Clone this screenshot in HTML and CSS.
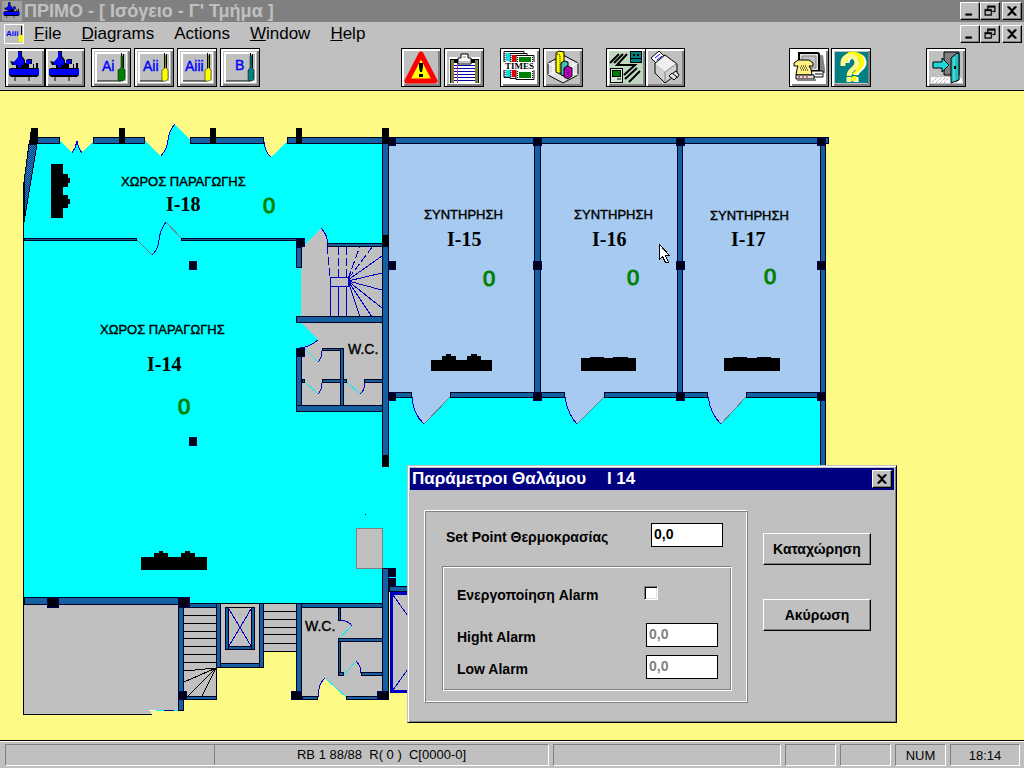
FILE: index.html
```html
<!DOCTYPE html>
<html lang="el">

<head>
  <meta charset="UTF-8" />
  <meta name="viewport" content="width=device-width, initial-scale=1" />
  <title>ΠΡΙΜΟ</title>
  <link rel="stylesheet" href="styles.css">
</head>

<body>
  <svg class="defs" aria-hidden="true">
    <symbol id="compressor" viewBox="1 1 38 37">
      <path d="M13 3h4v5l3 4v3h2v-4h5v5h-3v4h4v-4h1v4h2v-5h2v5l1 1v6l-2 2H6l-2-2v-6l2-1h5v-3H7l-2-4 4 1 4-4z" fill="#000" />
      <path d="M13 4h3v5l3 4v4h-3v3h-3v-3H9l-1-3 2-1 3-4zM21 12h5v4h-5zM6 21h28v6H6l-2-1v-4z" fill="#0000ff" />
      <path d="M10 28v5M24 28v5" stroke="#000" />
    </symbol>
    <symbol id="minimize" viewBox="0 0 20 18"><path d="M5 12h7v2H5z" /></symbol>
    <symbol id="restore" viewBox="0 0 20 18">
      <path d="M7 3h9v7h-3V9h2V5H8v2H7zM4 7h8v7H4zM5 9v4h6V9z" fill-rule="evenodd" />
    </symbol>
    <symbol id="close" viewBox="0 0 20 18">
      <path d="M5 4h2l3 3 3-3h2v1l-4 4 4 4v1h-2l-3-3-3 3H5v-1l4-4-4-4z" />
    </symbol>
  </svg>

  <div class="app">
    <header class="titlebar">
      <svg class="app-icon"><use href="#compressor" /></svg>
      <h1>ΠΡΙΜΟ - [ Ισόγειο - Γ' Τμήμα ]</h1>
      <div class="window-buttons">
        <button type="button" aria-label="Minimize"><svg><use href="#minimize" /></svg></button>
        <button type="button" aria-label="Restore"><svg><use href="#restore" /></svg></button>
        <button type="button" aria-label="Close"><svg><use href="#close" /></svg></button>
      </div>
    </header>

    <nav class="menubar">
      <svg class="doc-icon" viewBox="0 0 20 20">
        <path d="M0 0h20v20H0z" fill="#fff" />
        <path d="M1 1h18v18H1z" fill="#c0c0c0" />
        <text x="2" y="12">Aiii</text>
        <path d="M17 2h1v9h-1z" fill="#000" />
        <path d="M15 11h4v7h-4z" fill="#ffff00" />
      </svg>
      <button type="button"><u>F</u>ile</button>
      <button type="button"><u>D</u>iagrams</button>
      <button type="button">Actions</button>
      <button type="button"><u>W</u>indow</button>
      <button type="button"><u>H</u>elp</button>
      <div class="window-buttons">
        <button type="button" aria-label="Minimize diagram"><svg><use href="#minimize" /></svg></button>
        <button type="button" aria-label="Restore diagram"><svg><use href="#restore" /></svg></button>
        <button type="button" aria-label="Close diagram"><svg><use href="#close" /></svg></button>
      </div>
    </nav>

    <div class="toolbar">
      <div class="tools">
        <button type="button" aria-label="Compressors 1"><svg><use href="#compressor" /></svg></button>
        <button type="button" aria-label="Compressors 2"><svg><use href="#compressor" /></svg></button>
      </div>
      <div class="tools tools-floors">
        <button type="button" aria-label="Floor Ai">
          <svg viewBox="1 1 38 37">
            <path d="M4 4h32v31H4z" fill="#fff" /><path d="M6 6h29v27H6z" fill="#c0c0c0" />
            <path d="M6 33h24M30.500 5v15M32.500 6v14" class="ink" />
            <text x="11" y="23">Ai</text>
            <path d="M30 8h2v12l2 2v9l-2 2h-4l-1-2v-9l3-2z" fill="#008000" class="edge" />
          </svg>
        </button>
        <button type="button" aria-label="Floor Aii">
          <svg viewBox="1 1 38 37">
            <path d="M4 4h32v31H4z" fill="#fff" /><path d="M6 6h29v27H6z" fill="#c0c0c0" />
            <path d="M6 33h24M30.500 5v15M32.500 6v14" class="ink" />
            <text x="9" y="23">Aii</text>
            <path d="M31 8h1v12l2 2v9l-2 2h-4v-11l3-2z" fill="#ffff00" class="edge" />
          </svg>
        </button>
        <button type="button" aria-label="Floor Aiii">
          <svg viewBox="1 1 38 37">
            <path d="M4 4h32v31H4z" fill="#fff" /><path d="M6 6h29v27H6z" fill="#c0c0c0" />
            <path d="M6 33h24M30.500 5v15M32.500 6v14" class="ink" />
            <text x="8" y="23">Aiii</text>
            <path d="M31 8h1v12l2 2v9l-2 2h-4v-11l3-2z" fill="#ffff00" class="edge" />
          </svg>
        </button>
        <button type="button" aria-label="Floor B">
          <svg viewBox="1 1 38 37">
            <path d="M4 4h32v31H4z" fill="#fff" /><path d="M6 6h29v27H6z" fill="#c0c0c0" />
            <path d="M6 33h24M30.500 5v15M32.500 6v14" class="ink" />
            <text x="15" y="22">B</text>
            <path d="M30 8h2v12l2 2v9l-2 2h-3l-1-2v-9l2-2z" fill="#008080" class="edge" />
          </svg>
        </button>
      </div>
      <div class="tools tools-alarms">
        <button type="button" aria-label="Alarms">
          <svg viewBox="1 1 38 37">
            <path d="M20 6L34 33H6z" fill="#ffff00" stroke="#ff0000" stroke-width="5" stroke-linejoin="round" />
            <path d="M18 15h4v4l-1 5h-2l-1-5zM18 26h4v3h-4z" />
          </svg>
        </button>
        <button type="button" aria-label="Log">
          <svg viewBox="1 1 38 37">
            <path d="M5 9h31v27H5z" fill="#fff" />
            <path d="M6 11h29v24H6z" />
            <path d="M7 12h3v23H7zM31 12h3v23h-3z" fill="#808040" />
            <path d="M10 15h21v20H10z" fill="#fff" />
            <path d="M10 17.500h21M10 20.500h21M10 23.500h21M10 26.500h21M10 29.500h21M10 32.500h21" stroke="#0000a0" />
            <path d="M13.500 15v20" stroke="#c04080" />
            <path d="M14 10h3V6h7v4h3v6H14z" fill="#fff" stroke="#000" />
            <path d="M15 13h11v2H15zM19 8h3v2h-3z" fill="#c0c0c0" />
          </svg>
        </button>
      </div>
      <div class="tools tools-trends">
        <button type="button" aria-label="Times">
          <svg viewBox="1 1 38 37">
            <path d="M3 3h34v33H3z" fill="#fff" />
            <g stroke="#000">
              <path d="M4 3.500h20v26H4z" fill="#fff" /><path d="M10 5.500h17v25H10z" fill="#f8f0f0" />
              <path d="M16 7.500h18v24H16z" fill="#fff" />
            </g>
            <path d="M6 5h4v8H6zM6 22h4v7H6z" fill="#00e0e0" />
            <path d="M12 7h4v7h-4zM12 22h4v7h-4z" fill="#e00000" />
            <path d="M19 9h12v5H19zM19 24h12v6H19z" fill="#008000" />
            <path d="M5 5v9M11 7v7M17.500 9v5M32.500 9v5M5 22v8M11 22v8M17.500 23v8M32.500 23v8" stroke="#000" stroke-dasharray="1 1" />
            <path d="M3 14h34v8H3z" fill="#fff" />
            <text x="5" y="21" class="times">TIMES</text>
          </svg>
        </button>
        <button type="button" aria-label="Charts">
          <svg viewBox="1 1 38 37">
            <path d="M20 7l15 8v12l-15 8-15-8V15z" fill="#e0e0e0" stroke="#000" />
            <path d="M5 15l15 8 15-8M5 27l15-7 15 7M20 23v-3M10 13v14M30 13v14" stroke="#fff" fill="none" />
            <path d="M13 5l3-2 5 1v19l-4 3-4-2z" fill="#ffff00" stroke="#000" />
            <path d="M18 15l3-2 4 1v12l-4 2-3-1z" fill="#40c0c0" stroke="#000" />
            <path d="M21 20l3-2 5 2v8l-4 3-4-2z" fill="#c000c0" stroke="#000" />
            <path d="M14 6l3 1v18M21 21l4 1v8" stroke="#000" fill="none" stroke-dasharray="1 1" />
          </svg>
        </button>
      </div>
      <div class="tools tools-network">
        <button type="button" aria-label="Network">
          <svg viewBox="1 1 38 37">
            <path d="M3 3h34v33H3z" fill="#c0d8c0" />
            <path d="M24 3h12v12H24z" fill="#000" /><path d="M25 4h10v6H25zM25 11h10v3H25z" fill="#008080" />
            <path d="M27 6h2v2h-2zM31 6h2v2h-2z" />
            <path d="M4 20h13v15H4z" fill="#000" /><path d="M5 21h11v13H5z" fill="#d8e8d8" />
            <path d="M6 22h9v7H6z" /><path d="M7 23h7v5H7z" fill="#008000" /><path d="M11 31h4" stroke="#000" />
            <path d="M4 15L13 6M8 15l9-9M21 6L11 17h18L18 27" stroke="#000" stroke-width="2" fill="none" />
            <path d="M19 31l12-11M23 34l11-11" stroke="#000" stroke-width="2" />
          </svg>
        </button>
        <button type="button" aria-label="Connection" class="overlap">
          <svg viewBox="1 1 38 37">
            <path d="M6 10l8-7 6 6-8 7z" fill="#fff" stroke="#000" />
            <path d="M10 10l5-4M12 12l5-4" stroke="#0000ff" />
            <path d="M10 15L20 7l12 9v10L20 35 10 25z" fill="#d0d0d0" stroke="#000" />
            <path d="M11 16l9-8 11 8-10 8z" fill="#f0f0f0" />
            <path d="M20 34V24l11-8" stroke="#808080" fill="none" />
            <path d="M24 28l3-3 5 4-3 3zM28 25l3-2 3 4-2 3" fill="#e0e0e0" stroke="#000" />
          </svg>
        </button>
      </div>
      <div class="tools tools-support">
        <button type="button" aria-label="Telephone">
          <svg viewBox="1 1 38 37">
            <path d="M3 3h34v33H3z" fill="#fff" />
            <path d="M12 9l22-2 2 15v3H14z" fill="#808080" />
            <path d="M10 5h19l1 1v17H10z" fill="#e0e0e0" stroke="#000" stroke-width="2" />
            <path d="M13 8h14v12H13z" fill="#c0c0c0" stroke="#808080" />
            <path d="M19 23h15v6H19z" fill="#fff" stroke="#000" />
            <path d="M26 26h7" stroke="#000" />
            <path d="M5 15l4-3h11l4 3v3h-4l2 3 1 6H7l1-6 1-3H5z" fill="#fff080" stroke="#000" />
            <path d="M12 18h6M11 20h8M12 22h8" stroke="#000" stroke-dasharray="1 1" />
            <path d="M7 27h18v4H7z" fill="#e0e0e0" stroke="#000" />
            <path d="M9 29h12" stroke="#c00000" stroke-dasharray="2 2" /><path d="M8 32h19" stroke="#808080" stroke-width="2" />
          </svg>
        </button>
        <button type="button" aria-label="Help topics">
          <svg viewBox="1 1 38 37">
            <path d="M4 4h33v31H4z" fill="#008080" />
            <g fill="none" stroke-width="5">
              <path d="M16 15c0-11 17-10 17 0 0 6-8 7-8 12M25 29v5" stroke="#fff" />
              <path d="M14 14c0-11 17-10 17 0 0 6-8 7-8 12M23 28v5" stroke="#ffff00" />
              <path d="M12 18v-3c0-9 14-9 14 0 0 6-8 6-8 13M18 29v5" stroke="#fff890" />
              <path d="M15.500 28.500h6M15 25v3M21.500 25l3-3" stroke="#008080" stroke-width="1" />
            </g>
          </svg>
        </button>
      </div>
      <div class="tools tools-exit">
        <button type="button" aria-label="Exit">
          <svg viewBox="1 1 38 37">
            <path d="M5 29h30l2 6H5z" fill="#fff" />
            <path d="M6 34l6-5M10 35l6-6M14 35l6-6M18 35l5-6M30 35l5-6" stroke="#808080" stroke-dasharray="1 1" />
            <path d="M18 4h15v23H18z" fill="#808080" stroke="#000" />
            <path d="M25 10l6-5 2 1v26l-8 3z" fill="#20c0c0" stroke="#000" />
            <path d="M28 9v24" stroke="#80e0e0" />
            <path d="M28 18h2v3h-2z" />
            <path d="M7 14h9v-4l7 7-7 7v-4H7z" fill="#20d8d8" stroke="#000" />
          </svg>
        </button>
      </div>
    </div>

    <main class="workspace">
      <svg class="plan" viewBox="0 91 1024 649" role="img" aria-label="Κάτοψη ισογείου">
        <defs>
          <pattern id="hatch" width="2" height="2" patternUnits="userSpaceOnUse">
            <path d="M0 0h2v2H0z" fill="#083f78" />
            <path d="M0 0h1v1H0zM1 1h1v1H1z" fill="#2080c8" />
          </pattern>
        </defs>

        <!-- floors -->
        <path class="hot" d="M30 141H60L72 153 77 141 82 153 93 141H145L161 156 167 147 169 133 175 124 190 140V141H264L267 152 271 157 287 142H389V397H820V590H389V604H24V182z" />
        <path class="cold" d="M389 144H820V397H746L721 424 712 412 708 397H604L577 424 569 412 565 397H450L424 424 416 414 412 397H389z" />
        <path class="grey" d="M301 248L321 228 327 237 328 246H382V317H301z" />
        <path class="grey" d="M301 323H382V406H301V349L309 346 318 340z" />
        <path class="grey" d="M24 604H179V711H151V714H24z" />
        <path class="grey" d="M184 604H216V698H184zM220 604H260V664H220zM264 604H297V651H264z" />
        <path class="grey" d="M301 604H384V697H346L325 678 320 687 318 697H301z" />
        <path class="grey" d="M390 592H420V692H390z" />
        <rect x="356.500" y="528.500" width="26" height="40" fill="#c0c0c0" stroke="#808080" />

        <!-- door swings -->
        <g class="door">
          <path d="M72 153L75 148 77 141 79 148 82 153M161 156Q167 149 168 140T175 124M264 142Q265 152 271 157" />
          <path d="M152 255Q158 250 159 240T166 222M412 397Q413 414 424 424M565 397Q568 415 577 424M708 397Q711 415 721 424" />
          <path d="M321 228Q328 235 328 246M318 340Q310 347 300 348M322 351Q322 358 318 362M322 383Q322 390 318 394M365 383Q365 390 360 394" />
          <path d="M340 620Q349 621 352 626M356 661Q361 666 361 673M318 697Q318 684 325 678" />
        </g>
        <path class="leaf" d="M305 349L318 362M305 382L318 394M347 382L360 394M352 626L339 638M344 675L356 661M325 678L346 697" />
        <path class="leaf-grey" d="M137 240L152 255M166 222L181 238M424 424L450 397M577 424L604 397M721 424L746 397" />

        <!-- stairs and shafts -->
        <g class="blue-line">
          <path stroke-dasharray="8 3" d="M348 279L360 246M348 279L373 246M338.500 277V247M346.500 277V247M327 246L330 277" />
          <path d="M348 280L382 256M348 281L382 273M348 281L382 290M348 281L382 308M348 281L372 317M348 281L360 317" />
          <path d="M330.500 277.500h18v9h-18zM330.500 286V317M338.500 286V317M346.500 286V317" />
          <path d="M229 609L251 646M251 609L229 646M393 595L420 633M393 690L420 652" />
          <path d="M391.500 593.500h40v98h-40z" stroke-width="3" />
        </g>
        <path class="line" d="M184 615.500h32M184 623.500h32M184 631.500h32M184 638.500h32M184 646.500h32M184 654.500h32M184 662.500h32" />
        <path class="line" d="M216 668L184 671M216 668L184 682M216 668L188 696M216 668L202 696M216.500 667V700" />
        <path class="line" d="M264 603.500h32M264 611.500h32M264 619.500h32M264 627.500h32M264 634.500h32M264 643.500h32M264 651h32" />
        <path class="line" d="M221 603.500h38M229 607.500h22M23.500 182V714.500H152" />
        <path d="M149 710.500h15" stroke="#fff" /><path d="M156 710.500h22" stroke="#00ffff" /><path d="M164 710.500h10" stroke="#000080" />

        <!-- walls -->
        <path class="wall" d="M29 144H37L24 222V182z" />
        <g class="wall" transform="translate(.5 .5)">
          <rect x="34" y="137" width="25" height="6" />
          <rect x="93" y="137" width="51" height="6" />
          <rect x="190" y="137" width="73" height="6" />
          <rect x="287" y="137" width="541" height="6" />
          <rect x="24" y="238" width="112" height="2" />
          <rect x="181" y="238" width="116" height="2" />
          <rect x="296" y="247" width="5" height="20" />
          <rect x="327" y="243" width="55" height="3" />
          <rect x="389" y="392" width="22" height="5" />
          <rect x="450" y="392" width="114" height="5" />
          <rect x="604" y="392" width="103" height="5" />
          <rect x="746" y="392" width="74" height="5" />
          <rect x="534" y="143" width="6" height="254" />
          <rect x="677" y="143" width="5" height="254" />
          <rect x="820" y="143" width="5" height="440" />
          <rect x="296" y="316" width="86" height="6" />
          <rect x="322" y="348" width="21" height="2" />
          <rect x="302" y="379" width="2" height="3" />
          <rect x="322" y="379" width="24" height="3" />
          <rect x="364" y="379" width="18" height="3" />
          <rect x="340" y="348" width="3" height="57" />
          <rect x="296" y="350" width="5" height="60" />
          <rect x="296" y="405" width="86" height="6" />
          <rect x="382" y="143" width="6" height="320" />
          <rect x="24" y="597" width="165" height="7" />
          <rect x="184" y="603" width="36" height="4" />
          <rect x="178" y="605" width="5" height="105" />
          <rect x="184" y="696" width="32" height="3" />
          <rect x="216" y="663" width="47" height="4" />
          <rect x="216" y="603" width="4" height="64" />
          <rect x="259" y="603" width="4" height="64" />
          <rect x="225" y="646" width="29" height="3" />
          <rect x="225" y="607" width="3" height="42" />
          <rect x="251" y="607" width="3" height="42" />
          <rect x="296" y="603" width="87" height="4" />
          <rect x="296" y="603" width="5" height="96" />
          <rect x="302" y="696" width="15" height="3" />
          <rect x="346" y="696" width="32" height="3" />
          <rect x="338" y="608" width="2" height="12" />
          <rect x="338" y="638" width="2" height="37" />
          <rect x="338" y="638" width="44" height="3" />
          <rect x="338" y="672" width="5" height="3" />
          <rect x="361" y="672" width="21" height="3" />
          <rect x="389" y="586" width="40" height="5" />
          <rect x="382" y="568" width="6" height="125" />
        </g>

        <!-- pillars -->
        <path d="M31 128h7v16h-9zM119 128h6v16h-6zM210 128h6v16h-6zM296 128h6v16h-6zM382 128h7v16h-7zM382 235h7v12h-7zM382 455h7v12h-7z" />
        <g class="pillar" transform="translate(.5 .5)">
          <path d="M389 138h6v7h-6zM533 138h8v7h-8zM676 138h8v7h-8zM817 138h8v7h-8zM389 261h6v8h-6zM533 261h8v8h-8zM676 261h8v8h-8zM817 261h8v8h-8zM389 392h6v8h-6zM533 392h8v8h-8zM676 392h8v8h-8zM817 392h8v8h-8z" />
          <path d="M189 261h7v8h-7zM189 437h7v8h-7zM296 238h8v8h-8zM296 348h8v8h-8zM47 597h11v10H47zM178 597h11v10h-11zM179 691h7v8h-7zM291 691h10v8h-10zM377 691h11v8h-11zM388 568h7v8h-7zM388 578h7v7h-7z" />
        </g>

        <!-- refrigeration units -->
        <path d="M51 164h12v10h5v4h2v5h-2v4h-5v8h5v4h2v5h-2v4h-5v10H51z" />
        <path d="M431 360h11v-4h4v-2h5v2h5v4h11v-4h4v-2h6v2h4v4h11v11h-61z" />
        <path d="M581 358h9v-1h14v1h9v-1h15v1h8v13h-55zM724 358h9v-1h14v1h10v-1h14v1h9v13h-56z" />
        <path d="M141 557h13v-4h5v-2h4v2h5v4h13v-4h4v-2h5v2h5v4h12v13h-66z" />
        <path d="M365 514h1v1h-1z" />

        <g class="room">
          <text x="121" y="186">ΧΩΡΟΣ ΠΑΡΑΓΩΓΗΣ</text>
          <text x="100" y="334">ΧΩΡΟΣ ΠΑΡΑΓΩΓΗΣ</text>
          <text x="424" y="219">ΣΥΝΤΗΡΗΣΗ</text>
          <text x="574" y="219">ΣΥΝΤΗΡΗΣΗ</text>
          <text x="710" y="220">ΣΥΝΤΗΡΗΣΗ</text>
        </g>
        <g class="wc">
          <text x="348" y="354">W.C.</text>
          <text x="305" y="631">W.C.</text>
        </g>
        <g class="room-code">
          <text x="166" y="211">I-18</text>
          <text x="147" y="371">I-14</text>
          <text x="447" y="246">I-15</text>
          <text x="592" y="246">I-16</text>
          <text x="731" y="246">I-17</text>
        </g>
        <g class="reading">
          <text x="263" y="213">0</text>
          <text x="178" y="414">0</text>
          <text x="483" y="286">0</text>
          <text x="627" y="285">0</text>
          <text x="764" y="284">0</text>
        </g>

        <path d="M659.500 244.500v15l3-3 3 6h3l-3-7h4z" fill="#fff" stroke="#000" />
      </svg>

      <form class="dialog">
        <div class="dialog-title">
          <h2>Παράμετροι Θαλάμου <span>I 14</span></h2>
          <button type="button" class="dialog-close" aria-label="Close dialog"><svg><use href="#close" /></svg></button>
        </div>
        <div class="dialog-body">
          <div class="frame">
            <div class="field">
              <label for="setPoint">Set Point Θερμοκρασίας</label>
              <input type="text" id="setPoint" value="0,0" />
            </div>
            <div class="frame-inner">
              <div class="field field-check">
                <label for="alarmOn">Ενεργοποίηση Alarm</label>
                <input type="checkbox" id="alarmOn" />
              </div>
              <div class="field">
                <label for="highAlarm">Hight Alarm</label>
                <input type="text" id="highAlarm" value="0,0" disabled />
              </div>
              <div class="field">
                <label for="lowAlarm">Low Alarm</label>
                <input type="text" id="lowAlarm" value="0,0" disabled />
              </div>
            </div>
          </div>
          <div class="dialog-actions">
            <button type="button">Καταχώρηση</button>
            <button type="button">Ακύρωση</button>
          </div>
        </div>
      </form>
    </main>

    <footer class="statusbar">
      <div class="panel panel-state"><span></span><span>RB 1 88/88&nbsp; R( 0 )&nbsp; C[0000-0]</span></div>
      <div class="panel panel-message"></div>
      <div class="panel panel-small"></div>
      <div class="panel panel-small"></div>
      <div class="panel panel-small">NUM</div>
      <div class="panel panel-clock">18:14</div>
    </footer>
  </div>
</body>

</html>
```
FILE: styles.css
```css
* {
  box-sizing: border-box;
  margin: 0;
  padding: 0;
}

body {
  font-family: "Liberation Sans", Arial, sans-serif;
  background-color: #c0c0c0;
  color: #000;
}

button,
input {
  font: inherit;
  color: inherit;
}

button svg {
  display: block;
  width: 100%;
  height: 100%;
}

.defs {
  position: absolute;
  width: 0;
  height: 0;
}

.app {
  display: flex;
  flex-direction: column;
  min-height: 100vh;
}

/* Title and menu */
.titlebar {
  display: flex;
  align-items: center;
  height: 22px;
  padding: 0 2px;
  background-color: #808080;
  color: #c0c0c0;
}

.app-icon {
  width: 20px;
  height: 20px;
  background-color: #a0a0a0;
}

.titlebar h1 {
  margin-left: 2px;
  font-size: 18px;
  line-height: 22px;
  white-space: pre;
}

.window-buttons {
  display: flex;
  margin-left: auto;
}

.window-buttons button,
.dialog-close {
  width: 20px;
  height: 18px;
  background-color: #c0c0c0;
  border: 1px solid;
  border-color: #fff #000 #000 #fff;
  box-shadow: inset -1px -1px #808080;
}

.window-buttons svg,
.dialog-close svg {
  overflow: visible;
  stroke: #000;
  stroke-width: 0.4px;
}

.window-buttons button:last-child {
  margin-left: 2px;
}

.menubar {
  display: flex;
  align-items: center;
  height: 23px;
  padding: 0 2px 0 4px;
}

.doc-icon {
  width: 20px;
  height: 20px;
}

.doc-icon text {
  font-size: 8px;
  font-weight: bold;
  fill: #0000ff;
}

.menubar > button {
  padding: 0 10px;
  font-size: 17px;
  line-height: 22px;
  background: none;
  border: none;
}

/* Toolbar */
.toolbar {
  display: flex;
  align-items: center;
  height: 46px;
  padding-left: 5px;
  border-bottom: 1px solid #000;
}

.tools {
  display: flex;
}

.tools button {
  width: 40px;
  height: 39px;
  background-color: #c0c0c0;
  border: 1px solid #000;
  box-shadow: inset 2px 2px #fff, inset -2px -2px #808080;
}

.tools text {
  font-size: 14px;
  fill: #0000ff;
  stroke: #0000ff;
  stroke-width: 0.4px;
}

.tools .times {
  font-family: "Liberation Serif", serif;
  font-size: 9px;
  font-weight: bold;
  fill: #000;
  stroke: none;
}

.tools .ink {
  fill: none;
  stroke: #000;
}

.tools .edge {
  stroke: #000;
  stroke-width: 0.5px;
}

.tools-floors {
  gap: 3px;
  margin-left: 6px;
}

.tools-alarms {
  gap: 3px;
  margin-left: 141px;
}

.tools-trends {
  gap: 3px;
  margin-left: 16px;
}

.tools-network {
  margin-left: 23px;
}

.tools .overlap {
  margin-left: -1px;
}

.tools-support {
  gap: 2px;
  margin-left: 104px;
}

.tools-exit {
  margin-left: 55px;
}

/* Floor plan */
.workspace {
  position: relative;
  flex: 1;
  background: repeating-conic-gradient(#ffff80 0% 25%, #fcf48a 0% 50%) 0 0 / 2px 2px;
}

.plan {
  display: block;
  width: 100%;
  height: auto;
  shape-rendering: crispEdges;
}

.hot {
  fill: #00ffff;
}

.cold {
  fill: #a6caf0;
}

.grey {
  fill: #c0c0c0;
}

.wall {
  fill: url(#hatch);
  stroke: #000020;
}

.pillar {
  fill: #000010;
  stroke: #000050;
}

.line {
  fill: none;
  stroke: #000;
}

.blue-line,
.door {
  fill: none;
  stroke: #0000c0;
}

.leaf {
  fill: none;
  stroke: #20e8e8;
}

.leaf-grey {
  fill: none;
  stroke: #608888;
}

.room {
  font-size: 13px;
  stroke: #000;
  stroke-width: 0.4px;
}

.wc {
  font-size: 14px;
  stroke: #000;
  stroke-width: 0.4px;
}

.room-code {
  font-family: "Liberation Serif", "Times New Roman", serif;
  font-size: 20px;
  font-weight: bold;
}

.reading {
  font-size: 22px;
  fill: #008000;
  stroke: #008000;
  stroke-width: 1px;
}

/* Dialog */
.dialog {
  position: absolute;
  top: 374px;
  left: 407px;
  width: 490px;
  padding: 2px;
  background-color: #c0c0c0;
  border: 1px solid;
  border-color: #c0c0c0 #000 #000 #c0c0c0;
  box-shadow: inset 1px 1px #fff, inset -1px -1px #808080;
  font-size: 14px;
  font-weight: bold;
}

.dialog-title {
  display: flex;
  align-items: center;
  justify-content: space-between;
  height: 22px;
  padding: 0 2px;
  background-color: #000080;
  color: #fff;
}

.dialog-title h2 {
  font-size: 17px;
}

.dialog-title span {
  margin-left: 16px;
}

.dialog-close {
  color: #000;
}

.dialog-body {
  display: flex;
  align-items: flex-start;
  gap: 15px;
  padding: 20px 23px 17px 14px;
}

.frame {
  flex: 1;
  padding: 12px 15px 11px 17px;
  border: 1px solid;
  border-color: #fff #808080 #808080 #fff;
  box-shadow: inset 1px 1px #808080, inset -1px -1px #fff;
}

.frame-inner {
  margin-top: 19px;
  padding: 14px 13px 11px 14px;
  border: 1px solid;
  border-color: #808080 #fff #fff #808080;
  box-shadow: inset 1px 1px #fff, inset -1px -1px #808080;
}

.field {
  display: flex;
  align-items: center;
  justify-content: space-between;
}

.frame > .field {
  padding: 0 9px 0 4px;
}

.field label {
  padding-top: 4px;
}

.field input[type="text"] {
  width: 72px;
  height: 24px;
  padding: 0 2px 3px;
  background-color: #fff;
  border: 1px solid #000;
}

.field input[type="text"]:disabled {
  color: #808080;
}

.frame-inner .field + .field {
  margin-top: 8px;
}

.frame-inner .field-check {
  height: 24px;
  padding-right: 60px;
  margin-bottom: 18px;
}

.field input[type="checkbox"] {
  appearance: none;
  width: 14px;
  height: 14px;
  background-color: #fff;
  border: 1px solid;
  border-color: #808080 #fff #fff #808080;
  box-shadow: inset 1px 1px #000, inset -1px -1px #e0e0e0;
}

.dialog-actions {
  display: flex;
  flex-direction: column;
  gap: 34px;
  width: 108px;
  padding-top: 23px;
}

.dialog-actions button {
  height: 32px;
  background-color: #c0c0c0;
  border: 1px solid;
  border-color: #fff #000 #000 #fff;
  box-shadow: inset -1px -1px #808080;
}

/* Status bar */
.statusbar {
  display: flex;
  gap: 4px;
  height: 28px;
  padding: 3px 4px 2px 5px;
  border-top: 1px solid #000;
  box-shadow: inset 0 1px #fff;
  font-size: 13px;
}

.panel {
  display: flex;
  align-items: center;
  justify-content: center;
  border: 1px solid;
  border-color: #808080 #fff #fff #808080;
}

.panel-state {
  flex: 544;
}

.panel-state span {
  flex: 334;
  align-self: stretch;
  line-height: 20px;
  text-align: center;
}

.panel-state span:first-child {
  flex: 209;
  border-right: 1px solid #808080;
}

.panel-message {
  flex: 227;
}

.panel-small {
  width: 51px;
}

.panel-clock {
  width: 70px;
}
```
